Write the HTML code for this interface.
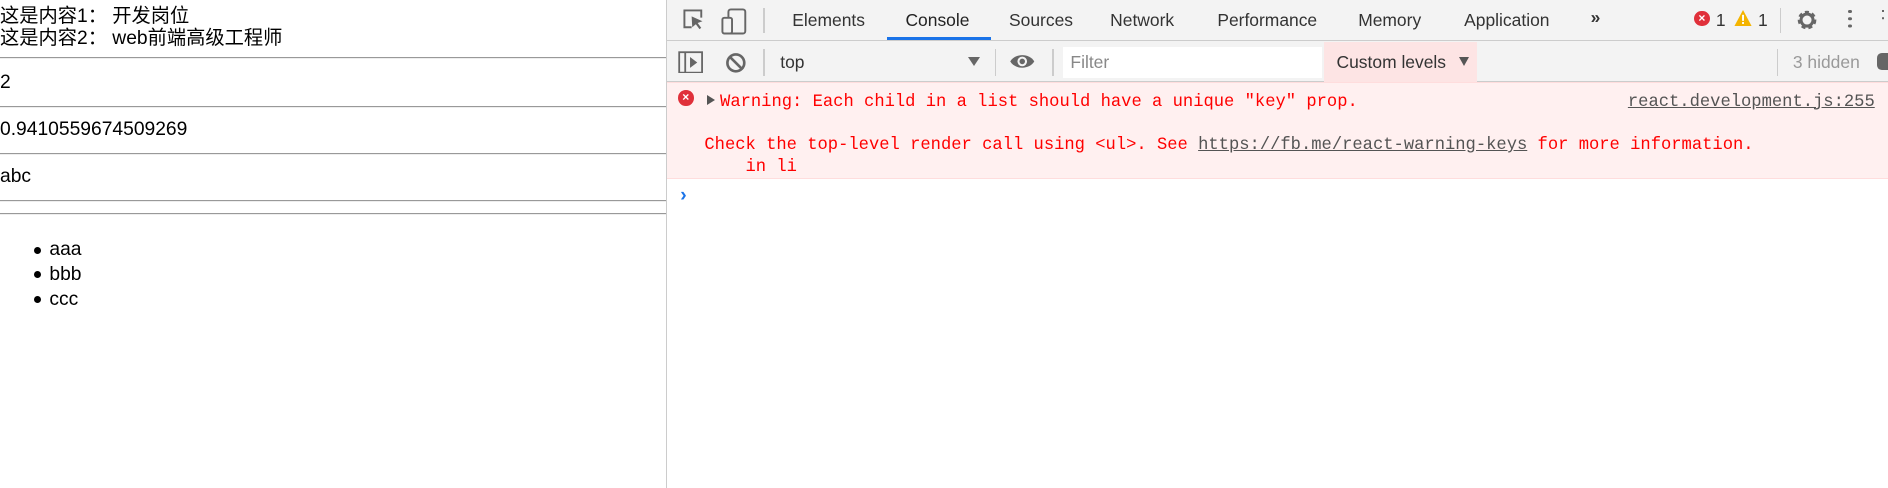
<!DOCTYPE html>
<html><head><meta charset="utf-8"><style>
html{zoom:1.20408}
body{margin:0;width:1568px;height:405px;position:relative;overflow:hidden;background:#fff;font-family:"Liberation Sans","Noto Sans CJK SC",sans-serif}
.a{position:absolute;white-space:nowrap}
.l{font-size:16px;color:#000;left:0}
.hr{position:absolute;left:0;width:553px;height:0;border-top:1px solid #999;border-bottom:1px solid #eee}
.t{font-size:14.5px;color:#333;top:8px}
.m{font-family:"Liberation Mono",monospace;font-size:14.25px;color:#f00;white-space:pre}
.ic{position:absolute}
</style></head><body>
<div class="a l" style="top:0">这是内容1： 开发岗位</div>
<div class="a l" style="top:18px">这是内容2： web前端高级工程师</div>
<div class="hr" style="top:47px"></div>
<div class="a l" style="top:60px">2</div>
<div class="hr" style="top:88px"></div>
<div class="a l" style="top:99px">0.9410559674509269</div>
<div class="hr" style="top:127px"></div>
<div class="a l" style="top:138px">abc</div>
<div class="hr" style="top:166px"></div>
<div class="hr" style="top:177px"></div>
<div class="a l" style="top:198px;left:41px;line-height:20.5px">aaa<br>bbb<br>ccc</div>
<div class="a" style="left:28px;top:205px;width:6px;height:6px;border-radius:50%;background:#000"></div>
<div class="a" style="left:28px;top:225px;width:6px;height:6px;border-radius:50%;background:#000"></div>
<div class="a" style="left:28px;top:246px;width:6px;height:6px;border-radius:50%;background:#000"></div>

<div class="a" style="left:553px;top:0;width:1px;height:405px;background:#ccc"></div>
<div class="a" style="left:554px;top:0;width:1014px;height:33px;background:#f3f3f3;border-bottom:1px solid #ccc"></div>
<div class="a" style="left:554px;top:34px;width:1014px;height:33px;background:#f3f3f3;border-bottom:1px solid #ccc"></div>
<div class="a" style="left:554px;top:68px;width:1014px;height:79px;background:#fff0f0;border-top:1px solid #fdd;border-bottom:1px solid #fdd"></div>

<svg class="ic" style="left:566px;top:7px" width="20" height="20" viewBox="0 0 20 20"><path d="M8 16H2V2h14v6" fill="none" stroke="#666" stroke-width="1.6"/><path d="M8 7l9 4-4 1.5 3 4-1.5 1-3-4-3 2.5z" fill="#666"/></svg>
<svg class="ic" style="left:598px;top:6px" width="24" height="24" viewBox="0 0 24 24"><rect x="7" y="2" width="14" height="20" rx="2" fill="none" stroke="#666" stroke-width="1.6"/><rect x="2" y="9" width="8" height="13" rx="1.5" fill="#f3f3f3" stroke="#666" stroke-width="1.6"/></svg>
<div class="a" style="left:634px;top:7px;width:1px;height:20px;background:#ccc"></div>
<div class="a t" style="left:658px">Elements</div>
<div class="a t" style="left:752px;color:#222">Console</div>
<div class="a" style="left:737px;top:31px;width:86px;height:2px;background:#1a73e8"></div>
<div class="a t" style="left:838px">Sources</div>
<div class="a t" style="left:922px">Network</div>
<div class="a t" style="left:1011px">Performance</div>
<div class="a t" style="left:1128px">Memory</div>
<div class="a t" style="left:1216px">Application</div>
<div class="a t" style="left:1321px;font-weight:bold;top:6px">»</div>
<div class="a" style="left:1407px;top:9px;width:13px;height:13px;border-radius:50%;background:#e0303a;color:#fff;font-size:10px;font-weight:bold;text-align:center;line-height:13px">×</div>
<div class="a t" style="left:1425px;top:8px">1</div>
<svg class="ic" style="left:1440px;top:8px" width="15" height="14" viewBox="0 0 15 14"><path d="M7.5 0L15 14H0z" fill="#f4b400"/><rect x="6.7" y="4" width="1.6" height="5" fill="#fff"/><rect x="6.7" y="10" width="1.6" height="1.6" fill="#fff"/></svg>
<div class="a t" style="left:1460px;top:8px">1</div>
<div class="a" style="left:1478px;top:7px;width:1px;height:20px;background:#ccc"></div>
<svg class="ic" style="left:1491px;top:7px" width="20" height="20" viewBox="0 0 20 20"><circle cx="10" cy="10" r="6" fill="none" stroke="#666" stroke-width="3.5" stroke-dasharray="3 2.3"/><circle cx="10" cy="10" r="5" fill="none" stroke="#666" stroke-width="2.5"/></svg>
<div class="a" style="left:1535px;top:8px;width:3px;height:3px;border-radius:50%;background:#666;box-shadow:0 6px #666,0 12px #666"></div>
<div class="a" style="left:1563px;top:8px;width:2px;height:2px;background:#666;box-shadow:0 6px #666"></div>

<svg class="ic" style="left:563px;top:42px" width="21" height="19" viewBox="0 0 21 19"><rect x="1" y="1" width="19" height="17" fill="none" stroke="#666" stroke-width="1.5"/><line x1="6" y1="1" x2="6" y2="18" stroke="#666" stroke-width="1.5"/><path d="M10 5l6 4.5-6 4.5z" fill="#666"/></svg>
<svg class="ic" style="left:602px;top:43px" width="18" height="18" viewBox="0 0 18 18"><circle cx="9" cy="9" r="7" fill="none" stroke="#666" stroke-width="2.2"/><line x1="4" y1="4" x2="14" y2="14" stroke="#666" stroke-width="2.2"/></svg>
<div class="a" style="left:634px;top:41px;width:1px;height:22px;background:#ccc"></div>
<div class="a t" style="left:648px;top:43px">top</div>
<div class="a" style="left:804px;top:47px;border-left:5px solid transparent;border-right:5px solid transparent;border-top:8px solid #666"></div>
<div class="a" style="left:826px;top:41px;width:1px;height:22px;background:#ccc"></div>
<svg class="ic" style="left:838px;top:44px" width="22" height="14" viewBox="0 0 22 14"><path d="M1 7C5 0 17 0 21 7 17 14 5 14 1 7z" fill="#666"/><circle cx="11" cy="7" r="4" fill="#f3f3f3"/><circle cx="11" cy="7" r="2.3" fill="#666"/></svg>
<div class="a" style="left:874px;top:41px;width:1px;height:22px;background:#ccc"></div>
<div class="a" style="left:883px;top:39px;width:215px;height:26px;background:#fff"></div>
<div class="a t" style="left:889px;top:43px;color:#888">Filter</div>
<div class="a" style="left:1100px;top:35px;width:127px;height:33px;background:#fde4e4"></div>
<div class="a t" style="left:1110px;top:43px">Custom levels</div>
<div class="a" style="left:1212px;top:47px;border-left:4.5px solid transparent;border-right:4.5px solid transparent;border-top:8px solid #555"></div>
<div class="a" style="left:1476px;top:41px;width:1px;height:22px;background:#ccc"></div>
<div class="a t" style="left:1489px;top:43px;color:#999">3 hidden</div>
<div class="a" style="left:1559px;top:44px;width:9px;height:14px;background:#666;border-radius:4px 0 0 4px"></div>

<div class="a" style="left:563px;top:75px;width:13px;height:13px;border-radius:50%;background:#e0303a;color:#fff;font-size:10px;font-weight:bold;text-align:center;line-height:13px">×</div>
<div class="a" style="left:587px;top:79px;border-top:4.5px solid transparent;border-bottom:4.5px solid transparent;border-left:7px solid #555"></div>
<div class="a m" style="left:598px;top:77px">Warning: Each child in a list should have a unique "key" prop.</div>
<div class="a m" style="right:11px;top:77px;color:#545454;text-decoration:underline">react.development.js:255</div>
<div class="a m" style="left:585px;top:113px">Check the top-level render call using &lt;ul&gt;. See <span style="color:#545454;text-decoration:underline">https://fb.me/react-warning-keys</span> for more information.</div>
<div class="a m" style="left:585px;top:131px">    in li</div>
<div class="a" style="left:565px;top:154px;color:#1a73e8;font-size:16px;font-weight:bold">›</div>
</body></html>
